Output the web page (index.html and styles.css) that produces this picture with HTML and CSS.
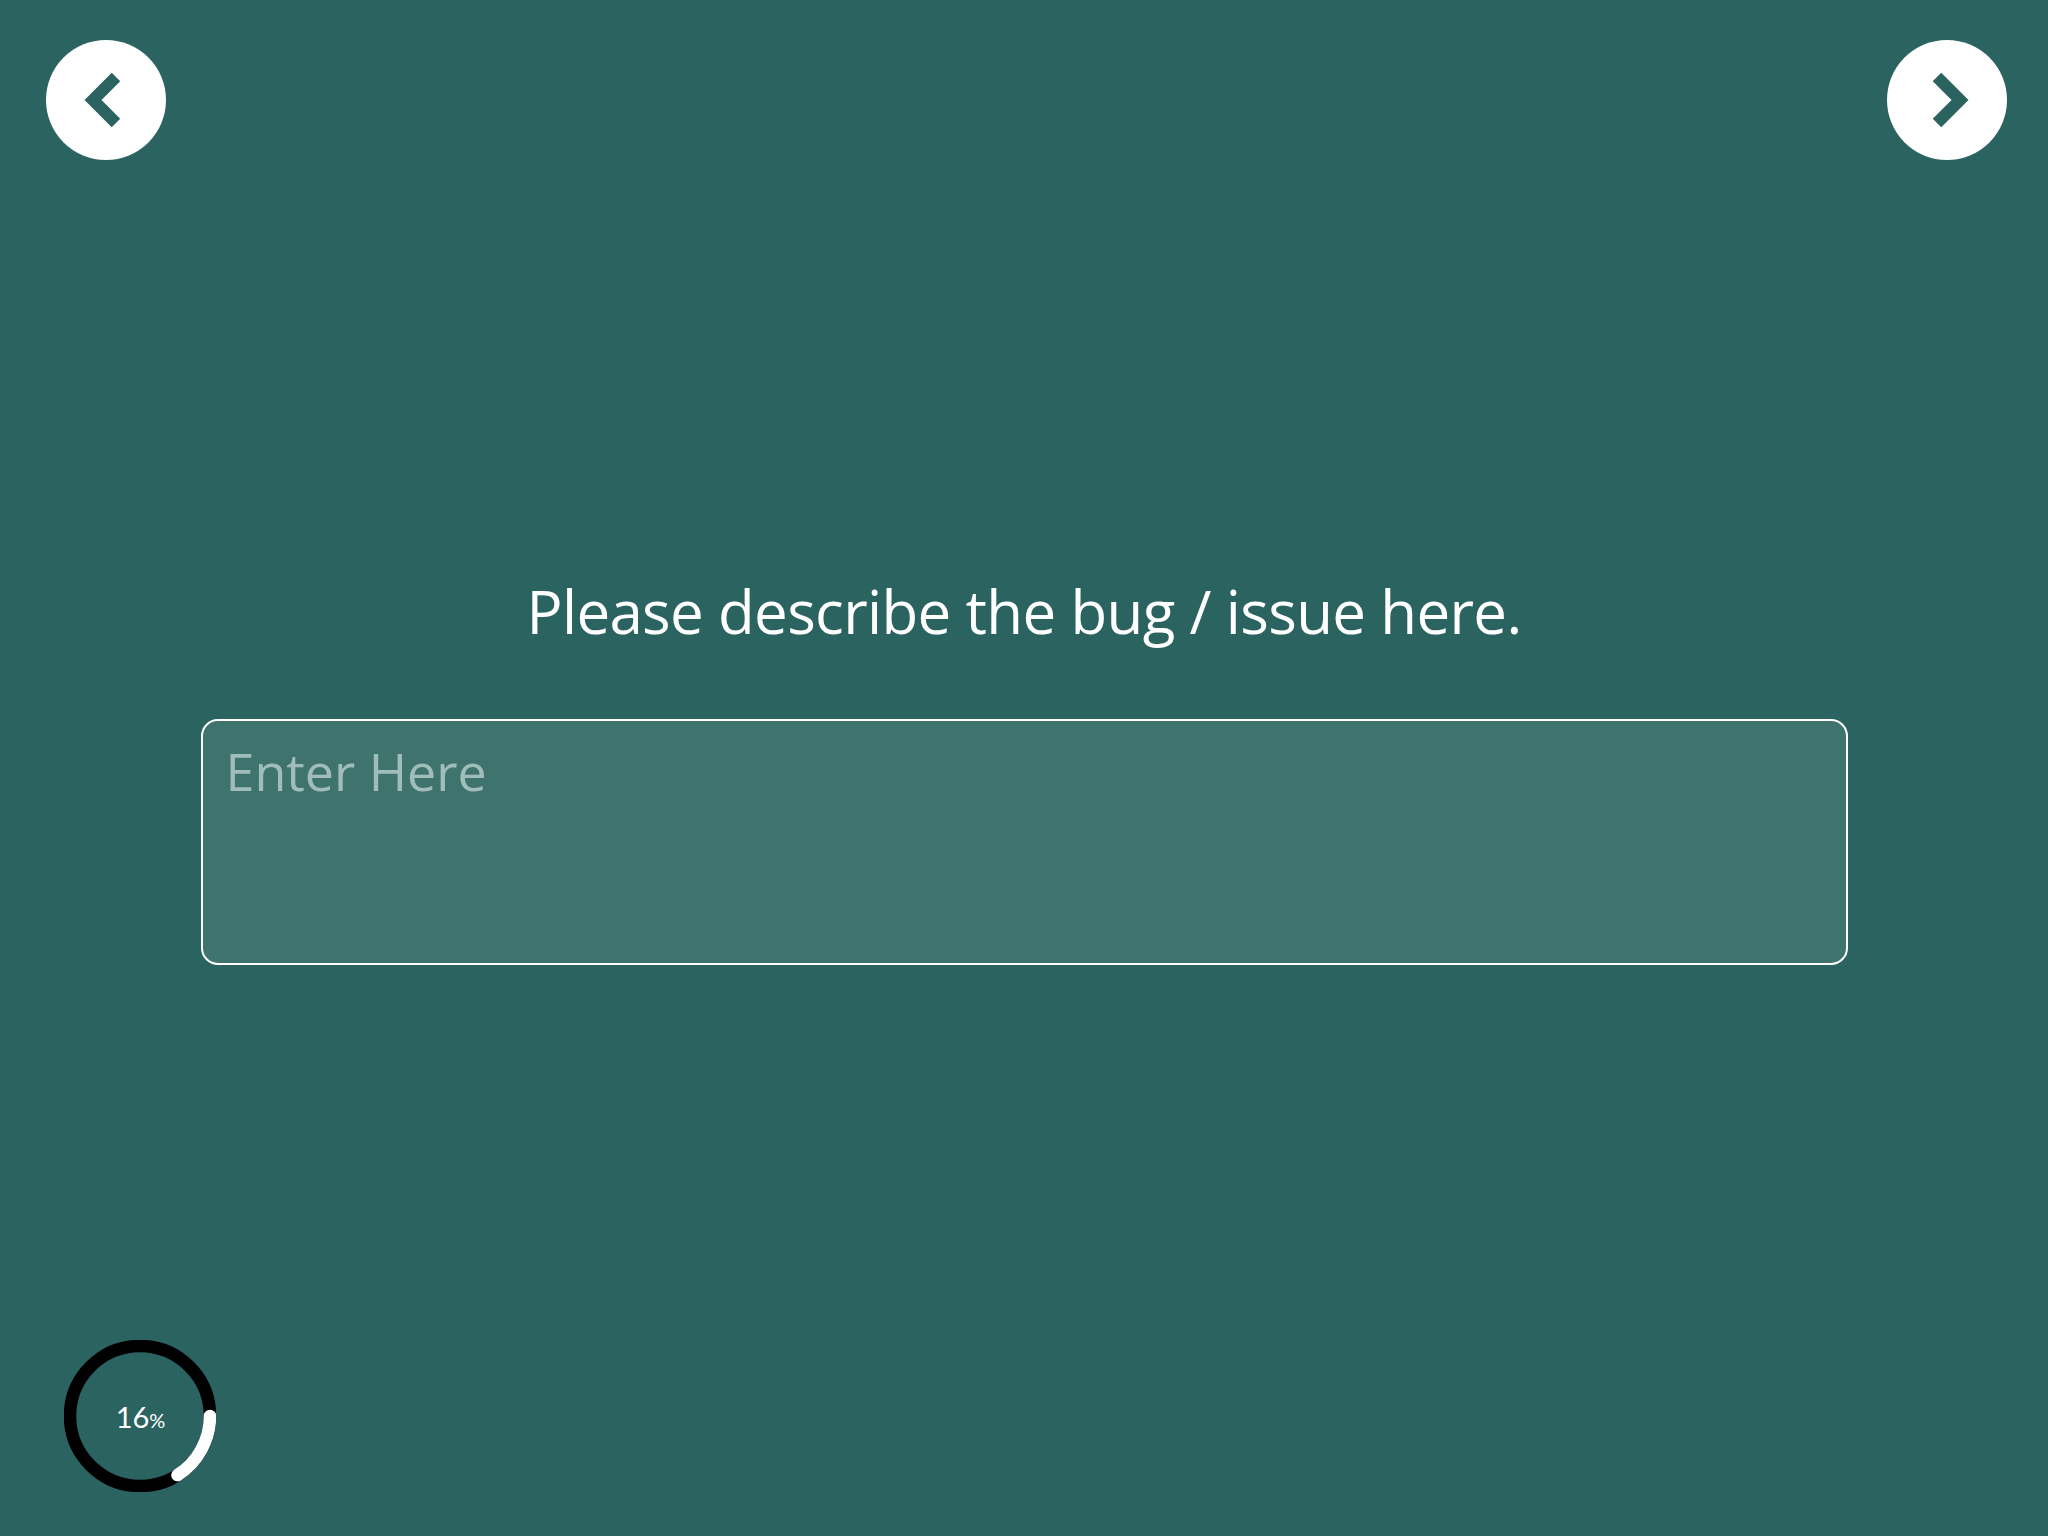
FILE: index.html
```html
<!DOCTYPE html>
<html lang="en">
<head>
    <meta charset="UTF-8">
    <meta name="viewport" content="width=device-width, initial-scale=1.0">
    <title>Report a Bug</title>
    <link rel="stylesheet" href="styles.css">
</head>
<body>
    <div class="page">
        <div class="topbar">
            <button class="nav-btn" aria-label="Back">
                <svg width="120" height="120" viewBox="0 0 120 120">
                    <polyline points="70,37 47,60 70,83" fill="none" stroke="#2a6360" stroke-width="12" stroke-linejoin="miter" stroke-linecap="butt"/>
                </svg>
            </button>
            <button class="nav-btn" aria-label="Next">
                <svg width="120" height="120" viewBox="0 0 120 120">
                    <polyline points="50,37 73,60 50,83" fill="none" stroke="#2a6360" stroke-width="12" stroke-linejoin="miter" stroke-linecap="butt"/>
                </svg>
            </button>
        </div>

        <div class="question">
            <h1 class="prompt">Please describe the bug / issue here.</h1>
            <textarea class="answer" placeholder="Enter Here"></textarea>
        </div>

        <div class="footer">
            <div class="progress">
                <svg width="152" height="152" viewBox="0 0 152 152">
                    <circle cx="76" cy="76" r="70" fill="none" stroke="#000" stroke-width="12.5"/>
                    <path d="M146 76 A70 70 0 0 1 113.5 135.1" fill="none" stroke="#fff" stroke-width="12.5" stroke-linecap="round"/>
                </svg>
                <div class="progress-label">16<span class="pct">%</span></div>
            </div>
        </div>
    </div>
</body>
</html>
```

FILE: styles.css
```css
body, html{
    margin: 0;
    height: 100%;
    width: 100%;
    background-color: #2a6360;
}
.page{
    min-height: 100vh;
    box-sizing: border-box;
    display: flex;
    flex-direction: column;
    padding: 40px 41px 44px 46px;
    font-family: 'Open Sans', 'Noto Sans', sans-serif;
    color: white;
}
.topbar{
    display: flex;
    justify-content: space-between;
}
.nav-btn{
    width: 120px;
    height: 120px;
    border-radius: 50%;
    border: none;
    padding: 0;
    background-color: white;
    display: flex;
    align-items: center;
    justify-content: center;
    cursor: pointer;
}
.question{
    display: flex;
    flex-direction: column;
    align-items: center;
    margin-top: 417px;
    padding-right: 5px;
}
.prompt{
    margin: 0;
    font-size: 60px;
    font-weight: 400;
    line-height: 1.16;
    letter-spacing: -0.65px;
}
.answer{
    margin-top: 72px;
    width: 1647px;
    height: 246px;
    box-sizing: border-box;
    padding: 19px 23px;
    border: 2px solid white;
    border-radius: 17px;
    background-color: #3f736e;
    font-family: 'Open Sans', 'Noto Sans', sans-serif;
    font-size: 52px;
    line-height: 1.2;
    color: white;
    resize: none;
    outline: none;
}
.answer::placeholder{
    color: #a0bdb9;
}
.footer{
    margin-top: auto;
    padding-left: 18px;
}
.progress{
    display: grid;
    width: 152px;
    height: 152px;
    place-items: center;
}
.progress svg, .progress-label{
    grid-area: 1 / 1;
}
.progress-label{
    font-family: 'Lato', sans-serif;
    font-weight: 400;
    font-size: 29px;
    padding-left: 1px;
}
.pct{
    font-size: 20px;
}
```
